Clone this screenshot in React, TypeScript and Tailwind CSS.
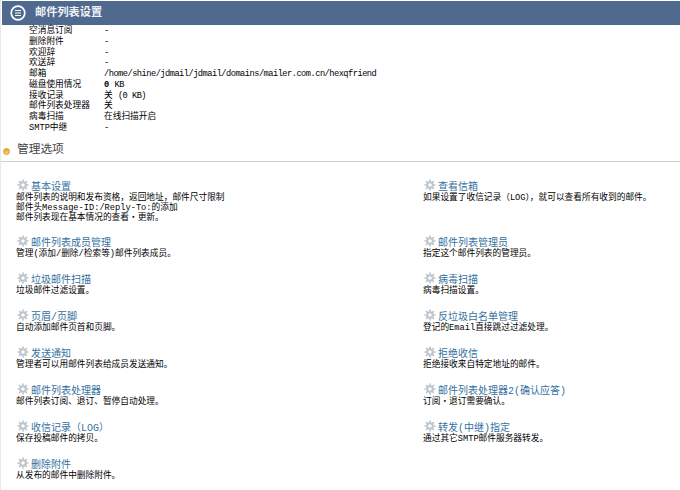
import React from 'react';

const stats: [string, React.ReactNode][] = [
  ['空消息订阅', '-'],
  ['删除附件', '-'],
  ['欢迎辞', '-'],
  ['欢送辞', '-'],
  ['邮箱', <span className="tracking-[-0.52px]">/home/shine/jdmail/jdmail/domains/mailer.com.cn/hexqfriend</span>],
  ['磁盘使用情况', <><b>0</b> <span className="tracking-[-0.52px]">KB</span></>],
  ['接收记录', <>关 <span className="tracking-[-0.52px]">(0 KB)</span></>],
  ['邮件列表处理器', '关'],
  ['病毒扫描', '在线扫描开启'],
  ['SMTP中继', '-'],
];

const options: { title: string; desc: string[] }[][] = [
  [
    { title: '基本设置', desc: ['邮件列表的说明和发布资格，返回地址，邮件尺寸限制', '邮件头Message-ID:/Reply-To:的添加', '邮件列表现在基本情况的查看・更新。'] },
    { title: '查看信箱', desc: ['如果设置了收信记录（LOG），就可以查看所有收到的邮件。'] },
  ],
  [
    { title: '邮件列表成员管理', desc: ['管理(添加/删除/检索等)邮件列表成员。'] },
    { title: '邮件列表管理员', desc: ['指定这个邮件列表的管理员。'] },
  ],
  [
    { title: '垃圾邮件扫描', desc: ['垃圾邮件过滤设置。'] },
    { title: '病毒扫描', desc: ['病毒扫描设置。'] },
  ],
  [
    { title: '页眉/页脚', desc: ['自动添加邮件页首和页脚。'] },
    { title: '反垃圾白名单管理', desc: ['登记的Email直接跳过过滤处理。'] },
  ],
  [
    { title: '发送通知', desc: ['管理者可以用邮件列表给成员发送通知。'] },
    { title: '拒绝收信', desc: ['拒绝接收来自特定地址的邮件。'] },
  ],
  [
    { title: '邮件列表处理器', desc: ['邮件列表订阅、退订、暂停自动处理。'] },
    { title: '邮件列表处理器2(确认应答)', desc: ['订阅・退订需要确认。'] },
  ],
  [
    { title: '收信记录（LOG）', desc: ['保存投稿邮件的拷贝。'] },
    { title: '转发(中继)指定', desc: ['通过其它SMTP邮件服务器转发。'] },
  ],
  [{ title: '删除附件', desc: ['从发布的邮件中删除附件。'] }],
];

const Gear = () => (
  <svg viewBox="0 0 12 12" className="w-[12px] h-[12px] shrink-0 mb-[3px] text-[#bcc4cc]" fill="none" stroke="currentColor">
    <circle cx="6" cy="6" r="2.8" strokeWidth="2" />
    <path strokeWidth="1.7" d="M6 .5v2M6 9.5v2M.5 6h2M9.5 6h2M2.1 2.1l1.4 1.4M8.5 8.5l1.4 1.4M2.1 9.9l1.4-1.4M8.5 3.5l1.4-1.4" />
  </svg>
);

const Option = ({ title, desc }: { title: string; desc: string[] }) => (
  <div>
    <div className="flex items-center gap-[2px] h-[12px] text-[10px] text-[#35719f]">
      <Gear />
      <span className="pt-[2px]">{title}</span>
    </div>
    {desc.map(line => (
      <div key={line} className="h-[10px] leading-[10px] -ml-px">{line}</div>
    ))}
  </div>
);

export default function App() {
  return (
    <div
      className="w-[680px] h-[490px] overflow-hidden bg-white text-[8.7px] text-black pl-px border-l border-[#e8e8e8]"
      style={{ fontFamily: '"Liberation Mono", "Noto Sans CJK SC", monospace' }}
    >
      <div className="h-[24px] mt-px bg-[#50698f] flex items-center pl-[8px] gap-[9px]">
        <svg viewBox="0 0 16 16" className="w-[16px] h-[16px] shrink-0" fill="none" stroke="white">
          <circle cx="8" cy="8" r="6.8" strokeWidth="1.7" />
          <path strokeWidth="1.1" d="M5 5.5h6M5 8h6M5 10.5h6" />
        </svg>
        <span className="text-[11.2px] font-bold text-[#eef1f5]">邮件列表设置</span>
      </div>

      <div className="pl-[27px] pt-px">
        {stats.map(([label, value]) => (
          <div key={label} className="grid grid-cols-[75px_1fr] h-[10.75px] leading-[10.75px]">
            <span>{label}</span>
            <span>{value}</span>
          </div>
        ))}
      </div>

      <div className="mt-[8px] h-[20px] flex items-center gap-[6px] border-b border-[#d0d0d0] -ml-[1px]">
        <span className="w-[7px] h-[7px] ml-[2px] rounded-full bg-gradient-to-b from-[#e8a020] to-[#f6d870] border border-[#d89a30]" />
        <span className="text-[11.7px] text-[#444] pl-px">管理选项</span>
      </div>

      <div className="mt-[19px] flex flex-col gap-[15px] pl-[15px]">
        {options.map(row => (
          <div key={row[0].title} className="grid grid-cols-[407px_1fr] first:-mb-px">
            {row.map(item => (
              <Option key={item.title} title={item.title} desc={item.desc} />
            ))}
          </div>
        ))}
      </div>
    </div>
  );
}
